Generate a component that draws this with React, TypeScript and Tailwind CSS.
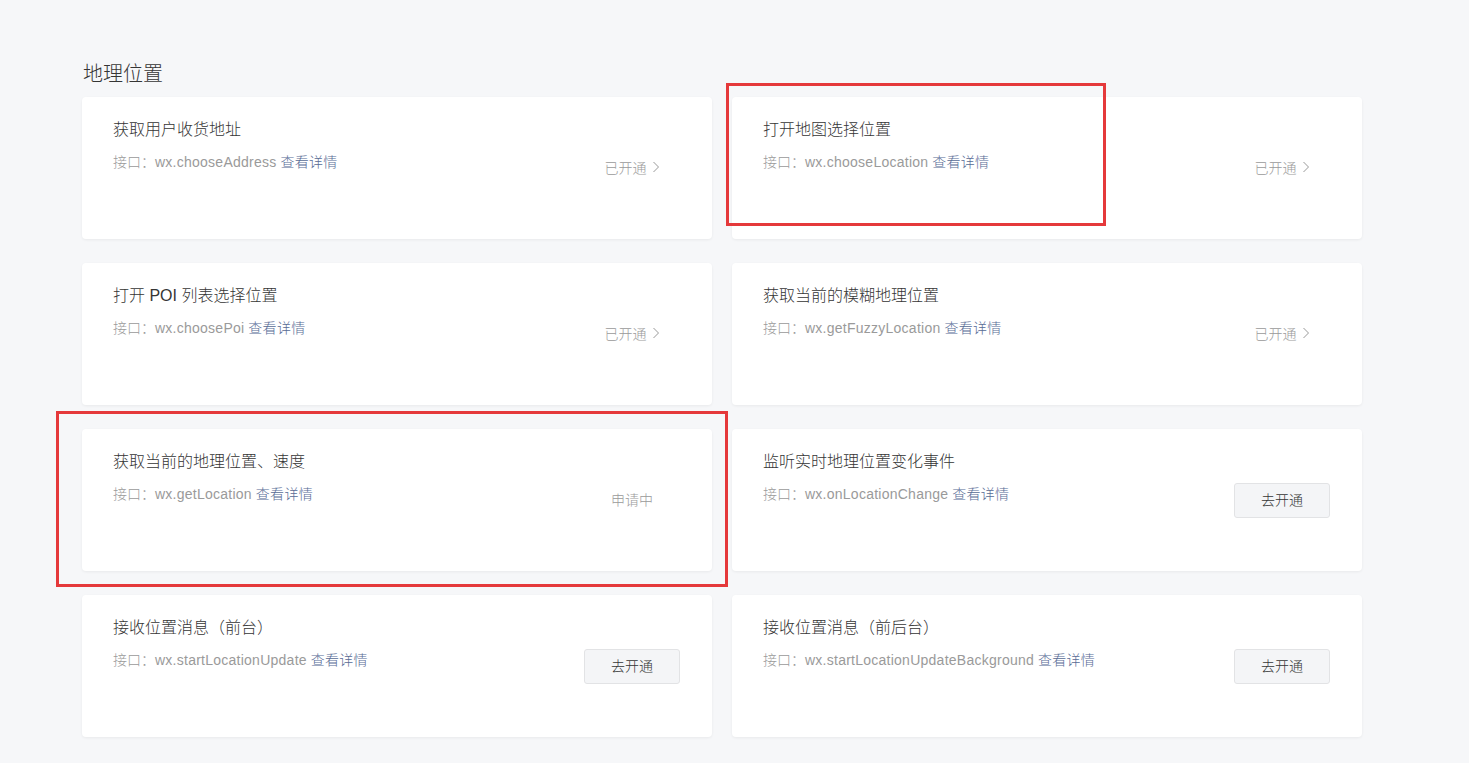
import React from "react";

type Item = {
  title: string;
  api: string;
  status: "opened" | "pending" | "open";
};

const items: Item[] = [
  { title: "获取用户收货地址", api: "wx.chooseAddress", status: "opened" },
  { title: "打开地图选择位置", api: "wx.chooseLocation", status: "opened" },
  { title: "打开 POI 列表选择位置", api: "wx.choosePoi", status: "opened" },
  { title: "获取当前的模糊地理位置", api: "wx.getFuzzyLocation", status: "opened" },
  { title: "获取当前的地理位置、速度", api: "wx.getLocation", status: "pending" },
  { title: "监听实时地理位置变化事件", api: "wx.onLocationChange", status: "open" },
  { title: "接收位置消息（前台）", api: "wx.startLocationUpdate", status: "open" },
  { title: "接收位置消息（前后台）", api: "wx.startLocationUpdateBackground", status: "open" },
];

function Status({ s }: { s: Item["status"] }) {
  if (s === "open") {
    return (
      <button className="w-[96px] h-[35px] rounded-[3px] border border-[#e2e3e5] bg-[#f4f5f7] text-[14px] font-light text-[#353535]">
        去开通
      </button>
    );
  }
  return (
    <div className="w-[96px] flex items-center justify-center text-[14px] font-light text-[#9a9a9a]">
      <span>{s === "opened" ? "已开通" : "申请中"}</span>
      {s === "opened" && (
        <svg width="8" height="12" viewBox="0 0 8 12" className="ml-[5px] -mt-[3px]">
          <path d="M1.5 1 L6.5 6 L1.5 11" fill="none" stroke="#9a9a9a" strokeWidth="1" />
        </svg>
      )}
    </div>
  );
}

function Card({ item }: { item: Item }) {
  return (
    <div className="h-[142px] bg-white rounded-[4px] shadow-[0_1px_3px_rgba(0,0,0,0.06)] flex items-center justify-between pl-[31px] pr-[32px]">
      <div className="self-start pt-[21px]">
        <div className="text-[16px] leading-[24px] font-light text-[#353535]">{item.title}</div>
        <div className="mt-[10px] text-[14px] leading-[20px] font-light text-[#9a9a9a]">
          接口：<span className="tracking-[0.25px]">{item.api}</span>{" "}
          <span className="text-[#576b95] tracking-[0.3px]">查看详情</span>
        </div>
      </div>
      <Status s={item.status} />
    </div>
  );
}

export default function App() {
  return (
    <div
      className="relative min-h-[763px] bg-[#f6f7f9] pl-[82px] pt-[60px] pb-[26px]"
      style={{ fontFamily: '"Liberation Sans", "Noto Sans CJK SC", sans-serif' }}
    >
      <h2 className="text-[20px] leading-[28px] font-light text-[#353535] ml-[1px]">地理位置</h2>
      <div className="mt-[9px] grid grid-cols-[630px_630px] gap-x-[20px] gap-y-[24px]">
        {items.map((it) => (
          <Card key={it.api} item={it} />
        ))}
      </div>
      <div className="absolute left-[726px] top-[83px] w-[380px] h-[143px] border-[3px] border-[#e5393b] pointer-events-none" />
      <div className="absolute left-[56px] top-[411px] w-[672px] h-[176px] border-[3px] border-[#e5393b] pointer-events-none" />
    </div>
  );
}
